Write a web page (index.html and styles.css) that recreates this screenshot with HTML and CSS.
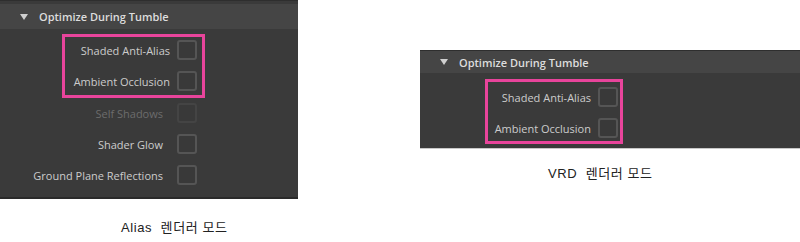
FILE: index.html
```html
<!DOCTYPE html>
<html>
<head>
    <title>Optimize During Tumble</title>
    <link rel="stylesheet" href="styles.css">
</head>
<body>
    <div class="page">
        <div class="figure figure-alias">
            <div class="panel panel-alias">
                <div class="panel-header">
                    <span class="arrow"></span>
                    <span class="title">Optimize During Tumble</span>
                </div>
                <div class="highlight">
                    <div class="row"><span class="label">Shaded Anti-Alias</span><span class="check"></span></div>
                    <div class="row"><span class="label">Ambient Occlusion</span><span class="check"></span></div>
                </div>
                <div class="row row-out disabled"><span class="label">Self Shadows</span><span class="check"></span></div>
                <div class="row row-out"><span class="label">Shader Glow</span><span class="check"></span></div>
                <div class="row row-out"><span class="label">Ground Plane Reflections</span><span class="check"></span></div>
            </div>
            <div class="caption caption-alias">Alias&nbsp; 렌더러 모드</div>
        </div>

        <div class="figure figure-vrd">
            <div class="panel panel-vrd">
                <div class="panel-header">
                    <span class="arrow"></span>
                    <span class="title">Optimize During Tumble</span>
                </div>
                <div class="highlight">
                    <div class="row"><span class="label">Shaded Anti-Alias</span><span class="check"></span></div>
                    <div class="row"><span class="label">Ambient Occlusion</span><span class="check"></span></div>
                </div>
            </div>
            <div class="caption caption-vrd">VRD&nbsp; 렌더러 모드</div>
        </div>
    </div>
</body>
</html>
```

FILE: styles.css
```css
body {
    margin: 0;
    background: #ffffff;
    font-family: "Open Sans", "Noto Sans", sans-serif;
}

.page {
    display: flex;
    align-items: flex-start;
    width: 800px;
}

.figure {
    display: flex;
    flex-direction: column;
}

.figure-alias {
    width: 298px;
}

.figure-vrd {
    margin-left: 122px;
    margin-top: 50px;
    width: 380px;
}

.panel {
    background: #3a3a3a;
    color: #cccccc;
    font-size: 11px;
    box-sizing: border-box;
}

.panel-alias {
    height: 199px;
    padding-top: 3px;
    border-top: 1px solid #2e2e2e;
    border-bottom: 2px solid #2a2a2a;
}

.panel-vrd {
    height: 99px;
    border-top: 1px solid #2e2e2e;
    border-bottom: 1px solid #c8c8c8;
}

.panel-header {
    display: flex;
    align-items: center;
    background: #454545;
    font-weight: 600;
    color: #dddddd;
}

.panel-alias .panel-header {
    height: 25px;
    padding-left: 20px;
}

.panel-vrd .panel-header {
    height: 22px;
    padding-left: 20px;
}

.arrow {
    width: 0;
    height: 0;
    border-left: 4px solid transparent;
    border-right: 4px solid transparent;
    border-top: 6px solid #cfcfcf;
    margin-right: 11px;
}

.highlight {
    border: 3px solid #e8449b;
    box-sizing: border-box;
}

.panel-alias .highlight {
    width: 143px;
    margin: 5px 0 0 62px;
    padding: 3px 5px 4px 0;
}

.panel-vrd .highlight {
    width: 138px;
    margin: 6px 0 0 65px;
    padding: 5px 2px 3px 0;
}

.row {
    display: flex;
    align-items: center;
    justify-content: flex-end;
    height: 20px;
    gap: 7px;
}

.highlight .row + .row {
    margin-top: 11px;
}

.row-out {
    width: 197px;
    gap: 14px;
    margin-top: 11px;
}

.highlight + .row-out {
    margin-top: 5px;
}

.label {
    white-space: nowrap;
}

.disabled .label {
    color: #6c6c6c;
}

.check {
    width: 20px;
    height: 20px;
    box-sizing: border-box;
    border: 2px solid #555555;
    border-radius: 3px;
    background: #393939;
}

.disabled .check {
    border-color: #444444;
}

.caption {
    font-family: "Liberation Sans", "Noto Sans CJK KR", sans-serif;
    font-size: 13px;
    letter-spacing: 0.6px;
    color: #222222;
}

.caption-alias {
    margin-top: 18px;
    padding-left: 121px;
}

.caption-vrd {
    margin-top: 14px;
    padding-left: 128px;
}
```
